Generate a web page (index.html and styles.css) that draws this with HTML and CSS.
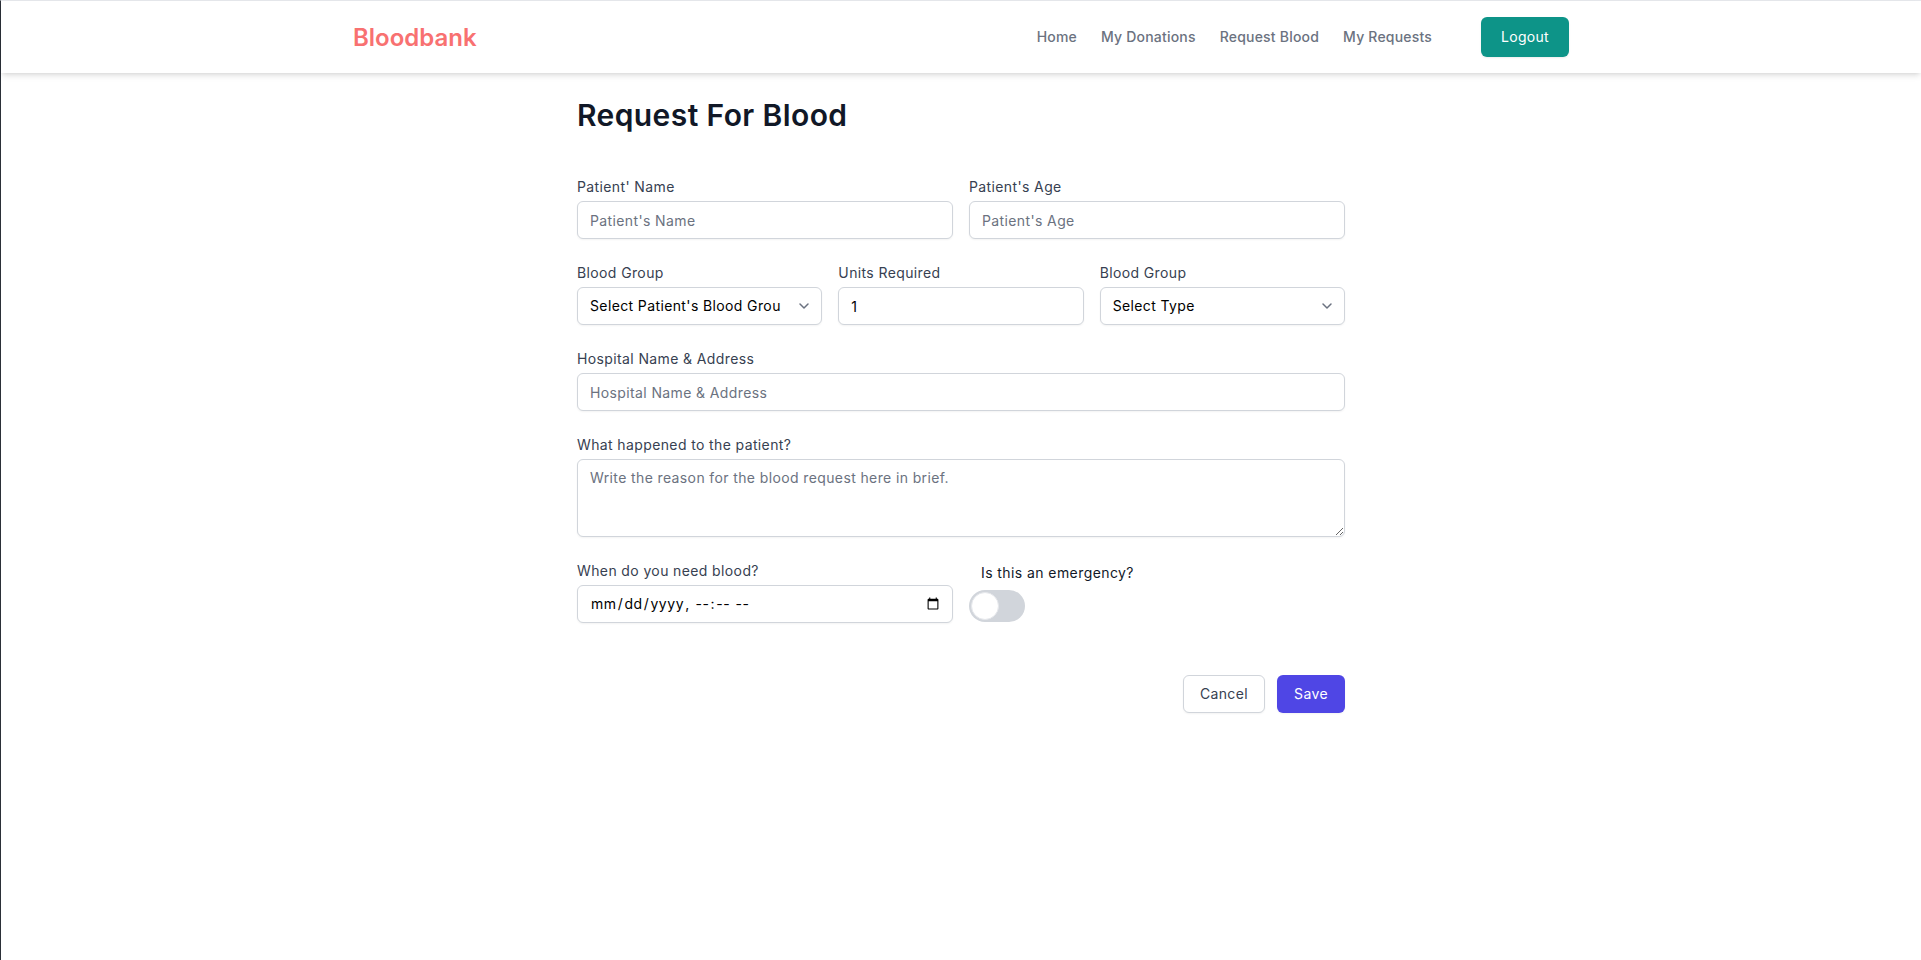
FILE: index.html
```html
<!DOCTYPE html>
<html lang="en">
<head>
<meta charset="utf-8">
<title>Bloodbank - Request For Blood</title>
<link rel="stylesheet" href="styles.css">
</head>
<body>
<div class="page">
  <nav class="nav">
    <div class="nav-inner">
      <a class="logo" href="#">Bloodbank</a>
      <div class="nav-right">
        <div class="links">
          <a class="link" href="#">Home</a>
          <a class="link" href="#">My Donations</a>
          <a class="link" href="#">Request Blood</a>
          <a class="link" href="#">My Requests</a>
        </div>
        <button class="logout" type="button">Logout</button>
      </div>
    </div>
  </nav>

  <main class="main">
    <h1 class="title">Request For Blood</h1>
    <form class="form">
      <div class="grid">
        <div class="field span-3">
          <label class="label">Patient' Name</label>
          <input class="input" type="text" placeholder="Patient's Name">
        </div>
        <div class="field span-3">
          <label class="label">Patient's Age</label>
          <input class="input" type="text" placeholder="Patient's Age">
        </div>

        <div class="field span-2">
          <label class="label">Blood Group</label>
          <div class="select-wrap">
            <select class="input select">
              <option>Select Patient's Blood Group</option>
            </select>
            <svg class="chevron" viewBox="0 0 20 20" width="20" height="20" fill="none"><path d="M6 8l4 4 4-4" stroke="#6b7280" stroke-width="1.5" stroke-linecap="round" stroke-linejoin="round"/></svg>
          </div>
        </div>
        <div class="field span-2">
          <label class="label">Units Required</label>
          <input class="input" type="text" value="1">
        </div>
        <div class="field span-2">
          <label class="label">Blood Group</label>
          <div class="select-wrap">
            <select class="input select">
              <option>Select Type</option>
            </select>
            <svg class="chevron" viewBox="0 0 20 20" width="20" height="20" fill="none"><path d="M6 8l4 4 4-4" stroke="#6b7280" stroke-width="1.5" stroke-linecap="round" stroke-linejoin="round"/></svg>
          </div>
        </div>

        <div class="field span-6">
          <label class="label">Hospital Name &amp; Address</label>
          <input class="input" type="text" placeholder="Hospital Name &amp; Address">
        </div>

        <div class="field span-6">
          <label class="label">What happened to the patient?</label>
          <textarea class="input textarea" rows="3" placeholder="Write the reason for the blood request here in brief."></textarea>
        </div>

        <div class="field span-3">
          <label class="label">When do you need blood?</label>
          <input class="input date" type="datetime-local">
        </div>
        <div class="field span-3 emergency">
          <span class="emergency-label">Is this an emergency?</span>
          <span class="toggle"><span class="knob"></span></span>
        </div>
      </div>

      <div class="actions">
        <button class="btn btn-cancel" type="button">Cancel</button>
        <button class="btn btn-save" type="submit">Save</button>
      </div>
    </form>
  </main>
</div>
</body>
</html>
```

FILE: styles.css
```css
* { box-sizing: border-box; }

html, body {
  margin: 0;
  padding: 0;
  background: #ffffff;
}

body {
  font-family: Inter, "Noto Sans", "Open Sans", sans-serif;
  color: #111827;
}

.page {
  min-height: 960px;
  border-left: 1px solid #2b3038;
  border-top: 1px solid #e5e7eb;
}

.nav {
  background: #ffffff;
  box-shadow: 0 4px 6px -1px rgba(0,0,0,0.10), 0 2px 4px -2px rgba(0,0,0,0.10);
}

.nav-inner {
  max-width: 1280px;
  margin: 0 auto;
  padding: 16px 32px;
  display: flex;
  align-items: center;
  justify-content: space-between;
  height: 72px;
}

.logo {
  font-size: 24px;
  font-weight: 600;
  color: #f87171;
  text-decoration: none;
}

.nav-right {
  display: flex;
  align-items: center;
}

.links {
  display: flex;
  align-items: center;
}

.link {
  font-size: 14px;
  font-weight: 500;
  color: #6b7280;
  text-decoration: none;
  padding: 8px 12px;
  line-height: 20px;
  letter-spacing: 0.2px;
}

.logout {
  margin-left: 37px;
  background: #0d9488;
  color: #ffffff;
  border: none;
  border-radius: 6px;
  font-family: inherit;
  font-size: 14px;
  line-height: 20px;
  padding: 10px 20px;
  letter-spacing: 0.3px;
  box-shadow: 0 1px 2px rgba(0,0,0,0.08);
}

.main {
  max-width: 768px;
  margin: 0 auto;
  padding-top: 24px;
}

.title {
  margin: 0;
  font-size: 30px;
  line-height: 36px;
  font-weight: 600;
  color: #111827;
  letter-spacing: 0.4px;
}

.form {
  margin-top: 44px;
}

.grid {
  display: grid;
  grid-template-columns: repeat(6, 1fr);
  column-gap: 16px;
  row-gap: 24px;
}

.span-2 { grid-column: span 2; }
.span-3 { grid-column: span 3; }
.span-6 { grid-column: span 6; }

.field {
  display: flex;
  flex-direction: column;
}

.label {
  font-size: 14px;
  line-height: 20px;
  color: #374151;
  margin-bottom: 4px;
  letter-spacing: 0.38px;
}

.input {
  width: 100%;
  border: 1px solid #d1d5db;
  border-radius: 6px;
  padding: 8px 12px;
  font-family: inherit;
  font-size: 14px;
  line-height: 20px;
  letter-spacing: 0.38px;
  color: #000000;
  background: #ffffff;
  box-shadow: 0 1px 2px rgba(0,0,0,0.05);
  height: 38px;
  outline: none;
}

.input::placeholder {
  color: #6b7280;
  opacity: 1;
}

.select-wrap {
  position: relative;
}

.select {
  appearance: none;
  -webkit-appearance: none;
  padding-right: 40px;
  overflow: hidden;
  white-space: nowrap;
  text-overflow: clip;
}

.chevron {
  position: absolute;
  right: 8px;
  top: 9px;
  pointer-events: none;
}

.textarea {
  height: 78px;
  resize: vertical;
  display: block;
}

.date {
  padding-right: 10px;
  letter-spacing: 0.6px;
}

.emergency {
  padding-top: 2px;
}

.emergency-label {
  font-size: 14px;
  line-height: 20px;
  color: #111827;
  margin-left: 12px;
  letter-spacing: 0.42px;
}

.toggle {
  margin-top: 7px;
  width: 56px;
  height: 32px;
  border-radius: 999px;
  background: #d1d5db;
  position: relative;
  display: block;
}

.knob {
  position: absolute;
  left: 2px;
  top: 2px;
  width: 28px;
  height: 28px;
  border-radius: 50%;
  background: #ffffff;
  border: 1px solid #e5e7eb;
}

.actions {
  display: flex;
  justify-content: flex-end;
  margin-top: 52px;
  gap: 12px;
}

.btn {
  font-family: inherit;
  font-size: 14px;
  line-height: 20px;
  padding: 8px 16px;
  border-radius: 6px;
  height: 38px;
  letter-spacing: 0.38px;
}

.btn-cancel {
  background: #ffffff;
  border: 1px solid #d1d5db;
  color: #374151;
  box-shadow: 0 1px 2px rgba(0,0,0,0.05);
}

.btn-save {
  background: #4f46e5;
  border: 1px solid transparent;
  color: #ffffff;
  box-shadow: 0 1px 2px rgba(0,0,0,0.05);
}
```
